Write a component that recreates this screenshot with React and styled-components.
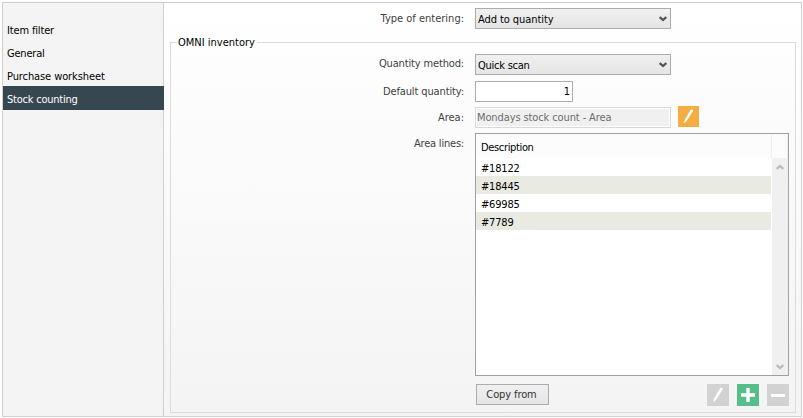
import React from "react";
import styled, { createGlobalStyle } from "styled-components";

const GlobalStyle = createGlobalStyle`
  *, *::before, *::after { box-sizing: border-box; }
  body {
    margin: 0;
    background: #fff;
    overflow: hidden;
    font: 11px/14px "DejaVu Sans Condensed", "DejaVu Sans", sans-serif;
    font-stretch: condensed;
    color: #000;
  }
`;

const Frame = styled.div`
  display: flex;
  width: 800px;
  height: 415px;
  margin: 2px 0 0 2px;
  border: 1px solid #d0d0d0;
`;

const Sidebar = styled.nav`
  flex: 0 0 161px;
  padding-top: 14px;
  background: #f4f4f4;
  box-shadow: inset -1px 0 #d0d0d0;
`;

const NavItem = styled.a`
  display: block;
  height: ${(p) => (p.$active ? 24 : 23)}px;
  padding: 7px 0 0 4px;
  color: ${(p) => (p.$active ? "#fff" : "#000")};
  background: ${(p) => (p.$active ? "#37474f" : "transparent")};
  letter-spacing: ${(p) => p.$track || 0}px;
  white-space: nowrap;
`;

const Content = styled.main`
  flex: 1;
  display: flex;
  flex-direction: column;
  padding: 5px 5px 0 6px;
  background: linear-gradient(#fff, #f4f4f4);
`;

const Field = styled.div`
  display: flex;
  height: ${(p) => p.$height || 21}px;
  padding-left: ${(p) => p.$indent || 0}px;
  margin-bottom: ${(p) => p.$gap || 0}px;
`;

const Label = styled.label`
  flex: 0 0 293px;
  margin-right: 11px;
  padding-top: ${(p) => p.$top ?? 4}px;
  text-align: right;
  color: #404040;
  white-space: nowrap;
  letter-spacing: ${(p) => p.$track || 0}px;
`;

const SelectBox = styled.div`
  display: flex;
  justify-content: space-between;
  width: 196px;
  height: 21px;
  padding: 4px 3px 0 2px;
  border: 1px solid #acacac;
  background: linear-gradient(#f0f0f0, #e5e5e5);
  letter-spacing: ${(p) => p.$track || 0}px;
`;

const NumberBox = styled.div`
  width: 98px;
  height: 21px;
  padding: 3px 2px 0;
  border: 1px solid #abadb3;
  background: #fff;
  text-align: right;
`;

const LockedBox = styled.div`
  width: 196px;
  height: 21px;
  padding: 3px 0 0 1px;
  border: 1px solid #d9d9d9;
  background: #f0f0f0;
  box-shadow: inset 0 0 0 1px #fff;
  color: #6d6d6d;
  letter-spacing: ${(p) => p.$track || 0}px;
`;

const IconButton = styled.button`
  display: block;
  width: ${(p) => p.$size}px;
  height: ${(p) => p.$size}px;
  padding: 0;
  border: 0;
  background: ${(p) => p.$color};
  svg { display: block; }
`;

const AreaEdit = styled.div`
  margin: -1px 0 0 7px;
`;

const Group = styled.fieldset`
  width: 626px;
  height: 378px;
  margin: 6px 0 0;
  padding: 0;
  min-width: 0;
  border: 1px solid #dcdcdc;
`;

const Legend = styled.legend`
  height: 14px;
  margin-left: 6px;
  padding: 1px 2px 0 1px;
  letter-spacing: ${(p) => p.$track || 0}px;
`;

const GroupBody = styled.div`
  padding-top: 5px;
`;

const List = styled.div`
  display: grid;
  grid-template: 24px 1fr / 296px 16px;
  width: 314px;
  height: 243px;
  border: 1px solid #a0a0a0;
  background: #fff;
`;

const ListHeader = styled.div`
  grid-column: 1 / -1;
  padding: 7px 0 0 5px;
  background:
    linear-gradient(#e5f0fb, #e5f0fb) 295px 0 / 1px 100% no-repeat,
    linear-gradient(#e5f0fb, #e5f0fb) 311px 0 / 1px 100% no-repeat,
    #fcfcfc;
  letter-spacing: ${(p) => p.$track || 0}px;
`;

const Row = styled.div`
  height: 18px;
  padding: 4px 0 0 5px;
  width: 295px;
  background: ${(p) => (p.$striped ? "#e9eae1" : "#fff")};
  letter-spacing: -0.2px;
`;

const ScrollTrack = styled.div`
  display: flex;
  flex-direction: column;
  justify-content: space-between;
  padding: 3px 0 2px 4px;
  background: #f0f0f0;
`;

const Actions = styled.div`
  display: flex;
  gap: 8px;
  margin: 8px 0 0 304px;
`;

const CopyButton = styled.button`
  width: 73px;
  height: 21px;
  margin-left: 1px;
  margin-right: auto;
  padding: 1px 2px 0 0;
  border: 1px solid #acacac;
  background: linear-gradient(#f0f0f0, #e5e5e5);
  font: inherit;
  color: #333;
  letter-spacing: ${(p) => p.$track || 0}px;
`;

const ActionsRight = styled.div`
  display: flex;
  gap: 8px;
  margin-right: 6px;
`;

const Chevron = ({ up, color = "#555", w = 8 }) => (
  <svg width={w} height="12" viewBox="0 0 8 12" fill="none">
    <path d={up ? "M.7 8 4 5 7.3 8" : "M.7 4 4 7 7.3 4"} stroke={color} strokeWidth="2.3" />
  </svg>
);

const Pencil = ({ size }) => (
  <svg width={size} height={size} viewBox="0 0 21 21">
    <path d="M13 3.3 15 4 14.8 5.6 8.6 15 6.5 17 6 16.6 6.6 14Z" fill="#fff" />
  </svg>
);

const Plus = () => (
  <svg width="22" height="22" viewBox="0 0 22 22" fill="#fff">
    <path d="M9.3 4h3.4v5.3H18v3.4h-5.3V18H9.3v-5.3H4V9.3h5.3z" />
  </svg>
);

const Minus = () => (
  <svg width="22" height="22" viewBox="0 0 22 22" fill="#fff">
    <path d="M4 10h14v3H4z" />
  </svg>
);

const sections = [
  { name: "Item filter", track: -0.15 },
  { name: "General", track: -0.2 },
  { name: "Purchase worksheet", track: -0.1 },
  { name: "Stock counting", track: -0.22, active: true },
];

const areaLines = ["#18122", "#18445", "#69985", "#7789"];

export default function App() {
  return (
    <>
      <GlobalStyle />
      <Frame>
        <Sidebar>
          {sections.map((s) => (
            <NavItem key={s.name} $active={s.active} $track={s.track}>{s.name}</NavItem>
          ))}
        </Sidebar>
        <Content>
          <Field $indent={1}>
            <Label>Type of entering:</Label>
            <SelectBox $track={-0.07}>Add to quantity<Chevron /></SelectBox>
          </Field>
          <Group>
            <Legend>OMNI inventory</Legend>
            <GroupBody>
              <Field $gap={6}>
                <Label $top={3} $track={-0.15}>Quantity method:</Label>
                <SelectBox $track={-0.25}>Quick scan<Chevron /></SelectBox>
              </Field>
              <Field $gap={5}>
                <Label $track={-0.12}>Default quantity:</Label>
                <NumberBox>1</NumberBox>
              </Field>
              <Field $gap={5}>
                <Label>Area:</Label>
                <LockedBox $track={-0.11}>Mondays stock count - Area</LockedBox>
                <AreaEdit>
                  <IconButton $size={21} $color="#f2ad43" aria-label="Edit area"><Pencil size={21} /></IconButton>
                </AreaEdit>
              </Field>
              <Field $height={243}>
                <Label $track={-0.2}>Area lines:</Label>
                <List>
                  <ListHeader $track={-0.35}>Description</ListHeader>
                  <div>
                    {areaLines.map((line, i) => (
                      <Row key={line} $striped={i % 2 === 1}>{line}</Row>
                    ))}
                  </div>
                  <ScrollTrack>
                    <Chevron up color="#bbb" />
                    <Chevron color="#bbb" />
                  </ScrollTrack>
                </List>
              </Field>
              <Actions>
                <CopyButton $track={-0.1}>Copy from</CopyButton>
                <ActionsRight>
                  <IconButton $size={22} $color="#d2d2d2" aria-label="Edit line"><Pencil size={22} /></IconButton>
                  <IconButton $size={22} $color="#56bd8b" aria-label="Add line"><Plus /></IconButton>
                  <IconButton $size={22} $color="#d2d2d2" aria-label="Remove line"><Minus /></IconButton>
                </ActionsRight>
              </Actions>
            </GroupBody>
          </Group>
        </Content>
      </Frame>
    </>
  );
}
